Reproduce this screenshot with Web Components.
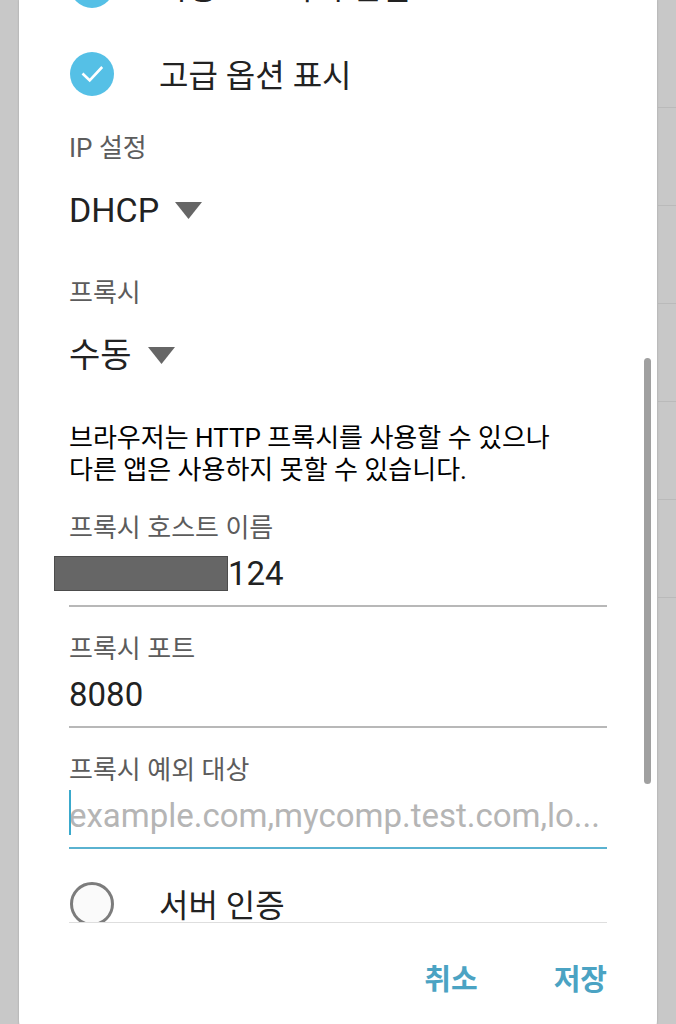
<!DOCTYPE html>
<html lang="ko">
<head>
<meta charset="utf-8">
<meta name="viewport" content="width=device-width, initial-scale=1">
<title>Wi-Fi</title>
<style>
  body {
    margin: 0;
    height: 100vh;
    overflow: hidden;
    background: #c8c8c8;
    color: #222;
    font-family: Roboto, 'Noto Sans CJK KR', sans-serif;
  }
</style>
</head>
<body>
<wifi-dialog>
  <check-row label="자동으로 다시 연결" checked></check-row>
  <check-row label="고급 옵션 표시" checked></check-row>
  <select-field label="IP 설정" options="DHCP,고정"></select-field>
  <select-field label="프록시" options="수동,없음"></select-field>
  <note-text>브라우저는 HTTP 프록시를 사용할 수 있으나 다른 앱은 사용하지 못할 수 있습니다.</note-text>
  <text-field label="프록시 호스트 이름" value="124" masked></text-field>
  <text-field label="프록시 포트" value="8080"></text-field>
  <text-field label="프록시 예외 대상" placeholder="example.com,mycomp.test.com,lo..." active></text-field>
  <check-row label="서버 인증"></check-row>
  <action-button slot="actions">취소</action-button>
  <action-button slot="actions">저장</action-button>
</wifi-dialog>

<script>
class WifiDialog extends HTMLElement {
  constructor() {
    super();
    this.attachShadow({ mode: 'open' });
  }

  connectedCallback() {
    this.render();
  }

  render() {
    this.shadowRoot.innerHTML = `
      <style>
        :host {
          display: block;
          position: relative;
          /* divider lines of the list behind the dialog */
          background: repeating-linear-gradient(#c8c8c8 0 97px, #bababa 97px 98px) 100% 10px / 18px 590px no-repeat;
        }
        .dialog {
          box-sizing: border-box;
          height: calc(100vh + 20px);
          margin: 0 19px;
          padding: 0 50px;
          display: flex;
          flex-direction: column;
          background: #fff;
          border-radius: 0 0 24px 24px;
          box-shadow: 0 0 2px #999;
        }
        .scroll {
          flex: 1;
          min-height: 0;
          overflow: hidden;
          margin-left: -15px;
          padding-left: 15px;
        }
        /* the list is scrolled by most of its first row */
        .content {
          margin-top: -58px;
        }
        .actions {
          height: 122px;
          box-sizing: border-box;
          padding-top: 33px;
          border-top: 1px solid #dedede;
          display: flex;
          justify-content: flex-end;
          align-items: flex-start;
          gap: 76px;
        }
        .thumb {
          position: absolute;
          right: 25px;
          top: 35vh;
          width: 7px;
          height: 426px;
          border-radius: 4px;
          background: #a0a0a0;
        }
      </style>

      <div class="dialog" role="dialog">
        <div class="scroll">
          <div class="content"><slot></slot></div>
        </div>
        <div class="actions"><slot name="actions"></slot></div>
      </div>
      <div class="thumb"></div>
    `;
  }
}

class CheckRow extends HTMLElement {
  constructor() {
    super();
    this.attachShadow({ mode: 'open' });
  }

  connectedCallback() {
    this.render();
  }

  render() {
    this.shadowRoot.innerHTML = `
      <style>
        :host {
          display: block;
        }
        label {
          display: flex;
          align-items: center;
          gap: 45px;
          height: 88px;
          padding-left: 1px;
          font-size: 32px;
          line-height: 48px;
        }
        .text {
          padding-top: 4px;
        }
        .box {
          display: grid;
        }
        .box > * {
          grid-area: 1 / 1;
        }
        input {
          appearance: none;
          box-sizing: border-box;
          width: 44px;
          height: 44px;
          margin: 0;
          border: 3px solid #7c7c7c;
          border-radius: 50%;
          background: #fafafa;
        }
        input:checked {
          border: 0;
          background: #55c0e6;
        }
        svg {
          visibility: hidden;
          pointer-events: none;
        }
        input:checked + svg {
          visibility: visible;
        }
      </style>

      <label>
        <span class="box">
          <input type="checkbox" ${this.hasAttribute('checked') ? 'checked' : ''}>
          <svg width="44" height="44" viewBox="0 0 44 44" fill="none" stroke="#fff" stroke-width="2.6">
            <path d="M12.5 21.5l7.2 7L32.2 15"/>
          </svg>
        </span>
        <span class="text">${this.getAttribute('label')}</span>
      </label>
    `;
  }
}

class SelectField extends HTMLElement {
  constructor() {
    super();
    this.attachShadow({ mode: 'open' });
  }

  connectedCallback() {
    this.render();
  }

  render() {
    const options = this.getAttribute('options').split(',');
    this.shadowRoot.innerHTML = `
      <style>
        :host {
          display: block;
          margin: 14px 0 43px;
        }
        label {
          display: block;
          color: #5c5c5c;
          font-size: 26px;
          line-height: 32px;
        }
        .control {
          display: flex;
          align-items: center;
          gap: 16px;
          margin-top: 22px;
        }
        select {
          appearance: none;
          field-sizing: content;
          height: 48px;
          padding: 0;
          border: 0;
          background: none;
          color: inherit;
          font-family: inherit;
          font-size: 34px;
          line-height: 48px;
        }
      </style>

      <label for="select">${this.getAttribute('label')}</label>
      <div class="control">
        <select id="select">${options.map((o) => `<option>${o}</option>`).join('')}</select>
        <svg width="27" height="17" viewBox="0 0 27 17" fill="#666"><path d="M0 0h27L13.5 17z"/></svg>
      </div>
    `;
  }
}

class NoteText extends HTMLElement {
  constructor() {
    super();
    this.attachShadow({ mode: 'open' });
  }

  connectedCallback() {
    this.shadowRoot.innerHTML = `
      <style>
        :host {
          display: block;
          margin-bottom: 26px;
          padding-right: 16px;
          color: #000;
          font-size: 26px;
          line-height: 32px;
          word-break: keep-all;
        }
      </style>
      <slot></slot>
    `;
  }
}

class TextField extends HTMLElement {
  constructor() {
    super();
    this.attachShadow({ mode: 'open' });
  }

  connectedCallback() {
    this.render();
  }

  render() {
    this.shadowRoot.innerHTML = `
      <style>
        :host {
          display: block;
          margin-bottom: 26px;
        }
        label {
          display: block;
          color: #5c5c5c;
          font-size: 26px;
          line-height: 32px;
        }
        .control {
          position: relative;
          box-sizing: border-box;
          display: flex;
          align-items: center;
          height: 63px;
          padding-bottom: 3px;
          border-bottom: 2px solid #b8b8b8;
        }
        input {
          flex: 1;
          min-width: 0;
          height: 48px;
          padding: 0;
          border: 0;
          outline: 0;
          background: none;
          color: inherit;
          font-family: inherit;
          font-size: 33px;
          text-overflow: ellipsis;
        }
        input::placeholder {
          color: #b5b5b5;
        }
        .mask {
          box-sizing: border-box;
          width: 174px;
          height: 35px;
          margin-left: -15px;
          border: 1px solid #4c4c4c;
          background: #666;
        }
        .caret {
          position: absolute;
          left: 0;
          top: 4px;
          width: 2px;
          height: 45px;
          background: #3aa9cc;
        }
        :host([active]) {
          margin-bottom: 11px;
        }
        :host([active]) .control {
          border-color: #5ab2d0;
        }
      </style>

      <label for="input">${this.getAttribute('label')}</label>
      <div class="control">
        ${this.hasAttribute('masked') ? '<span class="mask"></span>' : ''}
        <input id="input" type="text" value="${this.getAttribute('value') || ''}" placeholder="${this.getAttribute('placeholder') || ''}">
        ${this.hasAttribute('active') ? '<span class="caret"></span>' : ''}
      </div>
    `;
  }
}

class ActionButton extends HTMLElement {
  constructor() {
    super();
    this.attachShadow({ mode: 'open' });
  }

  connectedCallback() {
    this.shadowRoot.innerHTML = `
      <style>
        :host {
          display: block;
        }
        button {
          padding: 0;
          border: 0;
          background: none;
          color: #4ba3c3;
          font-family: inherit;
          font-size: 29px;
          font-weight: 700;
          line-height: 48px;
          cursor: pointer;
        }
      </style>
      <button type="button"><slot></slot></button>
    `;
  }
}

customElements.define('wifi-dialog', WifiDialog);
customElements.define('check-row', CheckRow);
customElements.define('select-field', SelectField);
customElements.define('note-text', NoteText);
customElements.define('text-field', TextField);
customElements.define('action-button', ActionButton);
</script>
</body>
</html>
